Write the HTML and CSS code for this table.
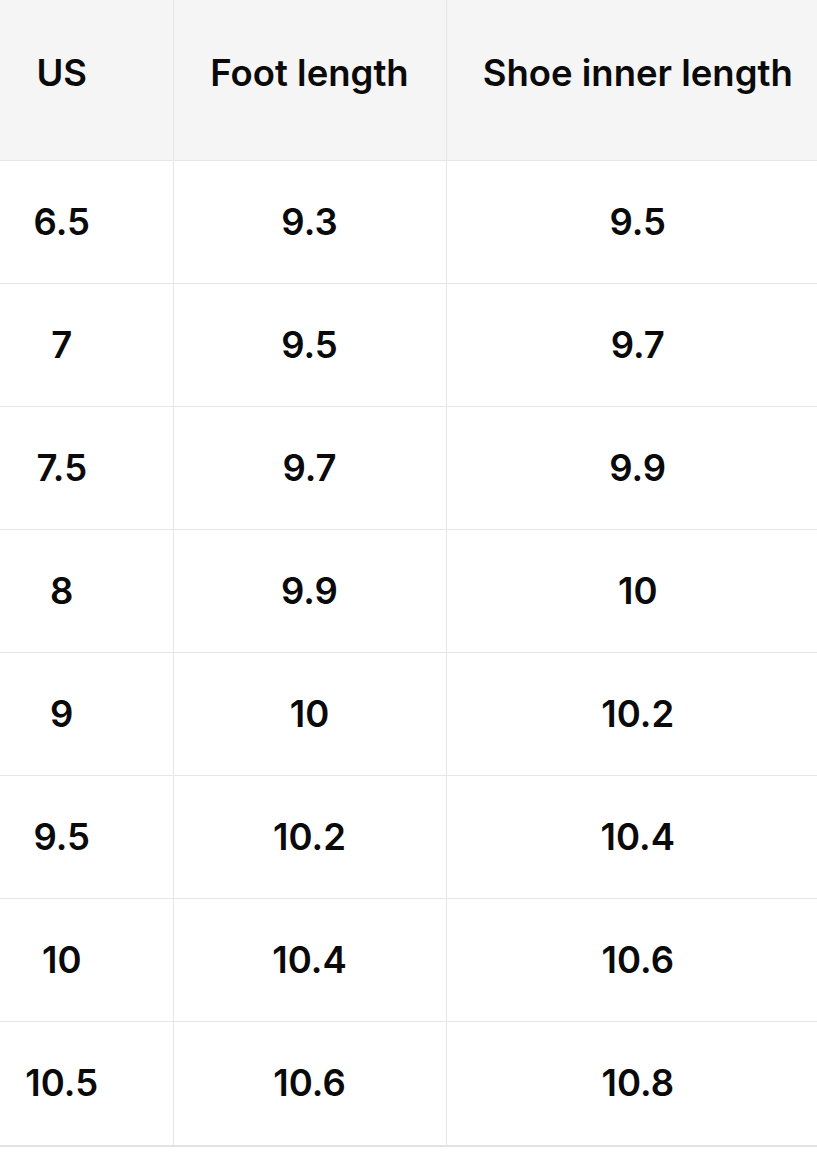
FILE: index.html
```html
<!DOCTYPE html>
<html>
<head>
<meta charset="utf-8">
<link rel="stylesheet" href="styles.css">
</head>
<body>
<table class="size-table">
  <thead>
    <tr><th class="c1">US</th><th class="c2">Foot length</th><th class="c3">Shoe inner length</th></tr>
  </thead>
  <tbody>
    <tr><td class="c1">6.5</td><td class="c2">9.3</td><td class="c3">9.5</td></tr>
    <tr><td class="c1">7</td><td class="c2">9.5</td><td class="c3">9.7</td></tr>
    <tr><td class="c1">7.5</td><td class="c2">9.7</td><td class="c3">9.9</td></tr>
    <tr><td class="c1">8</td><td class="c2">9.9</td><td class="c3">10</td></tr>
    <tr><td class="c1">9</td><td class="c2">10</td><td class="c3">10.2</td></tr>
    <tr><td class="c1">9.5</td><td class="c2">10.2</td><td class="c3">10.4</td></tr>
    <tr><td class="c1">10</td><td class="c2">10.4</td><td class="c3">10.6</td></tr>
    <tr><td class="c1 last">10.5</td><td class="c2 last">10.6</td><td class="c3 last">10.8</td></tr>
  </tbody>
</table>
</body>
</html>
```
FILE: styles.css
```css
html, body {
  margin: 0;
  padding: 0;
  background: #ffffff;
}
.size-table {
  width: 817px;
  border-collapse: collapse;
  table-layout: fixed;
  font-family: Inter, "Liberation Sans", sans-serif;
  font-weight: 600;
  font-size: 36.5px;
  color: #0a0a0a;
  border-bottom: 2px solid #e2e2e2;
}
.size-table th, .size-table td {
  text-align: center;
  padding: 0;
  border-left: 1px solid #e6e6e6;
  border-top: 1px solid #e6e6e6;
}
.size-table th {
  height: 160px;
  padding-bottom: 14px;
  box-sizing: border-box;
  background: #f5f5f5;
  font-weight: 600;
  border-top: none;
}
.size-table td {
  height: 122px;
}
.size-table td.last {
  height: 123px;
}
.size-table .c1 {
  width: 173px;
  padding-right: 49px;
  border-left: none;
  box-sizing: border-box;
}
.size-table .c2 {
  width: 273px;
  box-sizing: border-box;
}
.size-table .c3 {
  padding-left: 12px;
}
```
